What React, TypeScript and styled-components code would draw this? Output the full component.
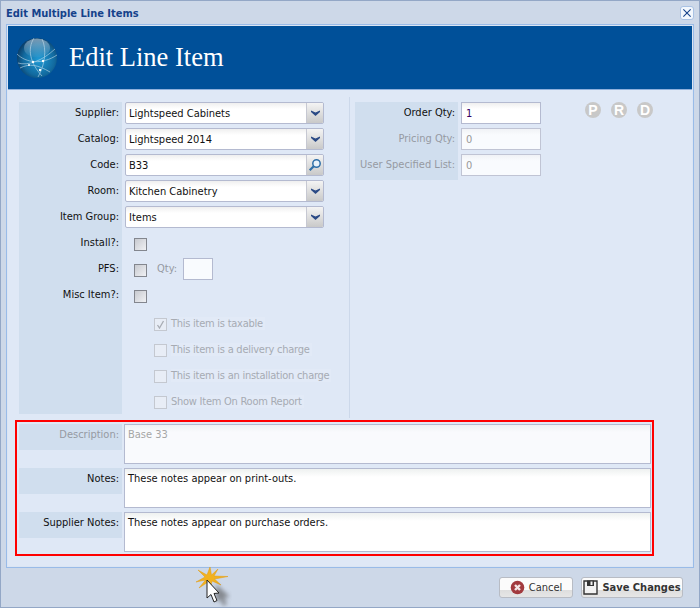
import React from "react";
import styled, { createGlobalStyle } from "styled-components";

const GlobalStyle = createGlobalStyle`
	html, body {
		margin: 0;
		padding: 0;
		background: #cdd8e8;
	}
	* {
		box-sizing: border-box;
	}
`;

const Windows = styled.div`
	position: relative;
	width: 700px;
	height: 608px;
	display: flex;
	flex-direction: column;
	background: #cdd8e8;
	border: 1px solid #93a7c6;
	font-family: "DejaVu Sans", "Liberation Sans", sans-serif;
	font-stretch: condensed;
	font-size: 11px;
	color: #111;
	overflow: hidden;
`;

const TitleBar = styled.div`
	height: 23px;
	flex: none;
	display: flex;
	align-items: center;
	justify-content: space-between;
	padding: 1px 5px 0 5px;
	font-weight: bold;
	font-size: 11px;
	color: #15428b;
`;

const CloseButton = styled.div`
	width: 14px;
	height: 14px;
	display: flex;
	align-items: center;
	justify-content: center;
	background: #f2f7fd;
	border: 1px solid #a9c2e4;
	border-radius: 3px;
`;

const Panel = styled.div`
	margin: 0 5px;
	height: 544px;
	flex: none;
	display: flex;
	flex-direction: column;
	background: #dfe8f6;
	border: 1px solid #99bbe8;
	outline: 1px solid #dbe5f3;
	outline-offset: -2px;
`;

const Banner = styled.div`
	height: 64px;
	flex: none;
	margin: 1px 1px 0;
	display: flex;
	align-items: center;
	gap: 11px;
	padding-left: 8px;
	background: #005099;
	border-bottom: 1px solid #8fb0dc;
`;

const BannerTitle = styled.div`
	font-family: "Liberation Serif", serif;
	font-stretch: normal;
	font-size: 26.5px;
	color: #fff;
`;

const Columns = styled.div`
	display: flex;
	margin-top: 7px;
	height: 321px;
	flex: none;
`;

const LeftColumn = styled.div`
	width: 343px;
	padding: 5px 0 0 12px;
	border-right: 1px solid #ccd8ea;
`;

const RightColumn = styled.div`
	display: flex;
	align-items: flex-start;
	padding: 5px 0 0 5px;
`;

const Rows = styled.div`
	display: flex;
	flex-direction: column;
`;

const Row = styled.div`
	display: flex;
	height: 26px;
`;

const LabelCell = styled.div<{ $dim?: boolean }>`
	width: 103px;
	height: 26px;
	flex: none;
	padding: 4px 3px 0 0;
	text-align: right;
	background: #d0deee;
	color: ${(p) => (p.$dim ? "#969aa2" : "#111")};
	white-space: nowrap;
`;

const FieldCell = styled.div`
	display: flex;
	align-items: flex-start;
	margin-left: 3px;
`;

const Combo = styled.div`
	width: 199px;
	height: 22px;
	display: flex;
	border: 1px solid #b4bad0;
	border-radius: 2px;
	background: linear-gradient(#efefef, #fff 6px);
	overflow: hidden;
`;

const ComboText = styled.div`
	flex: 1;
	padding: 4px 0 0 3px;
`;

const Trigger = styled.div`
	width: 17px;
	display: flex;
	align-items: center;
	justify-content: center;
	border-left: 1px solid #c6c8d2;
	background: linear-gradient(#f4f4f4, #c9c9c9);
`;

const Check = styled.div<{ $dim?: boolean }>`
	width: 13px;
	height: 13px;
	flex: none;
	display: flex;
	align-items: center;
	justify-content: center;
	border: 1px solid ${(p) => (p.$dim ? "#c4c8d0" : "#83868e")};
	background: ${(p) =>
		p.$dim ? "#e8edf6" : "linear-gradient(135deg, #c8cad0, #f0f1f4)"};
`;

const CheckSlot = styled.div`
	padding: 6px 0 0 9px;
`;

const QtyLabel = styled.div`
	margin: 4px 6px 0 10px;
	color: #969aa2;
`;

const QtyInput = styled.div`
	width: 30px;
	height: 22px;
	background: #f9fbfe;
	border: 1px solid #b4bad0;
`;

const OptionRow = styled.div`
	height: 26px;
	display: flex;
	align-items: flex-start;
	gap: 4px;
	padding: 8px 0 0 32px;
`;

const OptionText = styled.div`
	margin-top: -1px;
	padding-right: 2px;
	letter-spacing: -0.25px;
	color: #a6abb3;
	background: #e2eaf7;
`;

const SmallInput = styled.div<{ $dim?: boolean }>`
	width: 80px;
	height: 22px;
	padding: 4px 0 0 4px;
	border: 1px solid ${(p) => (p.$dim ? "#c0c4d4" : "#b4bad0")};
	background: ${(p) =>
		p.$dim
			? "linear-gradient(#f0f2f6, #f9fbfe 6px)"
			: "linear-gradient(#efefef, #fff 6px)"};
	color: ${(p) => (p.$dim ? "#999" : "#330066")};
`;

const Badges = styled.div`
	display: flex;
	gap: 10px;
	margin: 0 0 0 44px;
`;

const Badge = styled.div`
	width: 16px;
	height: 16px;
	border-radius: 50%;
	background: #c8c8c8;
	color: #fff;
	font-family: "Liberation Sans", sans-serif;
	font-stretch: normal;
	font-weight: bold;
	font-size: 14px;
	line-height: 16px;
	text-align: center;
`;

const Highlight = styled.div`
	width: 639px;
	height: 136px;
	flex: none;
	margin: 2px 0 0 8px;
	padding: 2px 1px 0 2px;
	display: flex;
	flex-direction: column;
	gap: 4px;
	border: 2px solid #f00;
`;

const NoteRow = styled.div`
	display: flex;
	height: 40px;
`;

const NoteField = styled.div<{ $dim?: boolean }>`
	flex: 1;
	margin-left: 2px;
	padding: 3px 3px;
	border: 1px solid #b4bad0;
	background: ${(p) =>
		p.$dim
			? "linear-gradient(#eef1f3, #f9fafd 7px)"
			: "linear-gradient(#eef1f0, #fff 8px)"};
	color: ${(p) => (p.$dim ? "#a6a6a6" : "#111")};
`;

const Footer = styled.div`
	flex: 1;
	display: flex;
	justify-content: flex-end;
	gap: 8px;
	padding: 9px 16px 0 0;
`;

const Button = styled.div<{ $width: number; $strong?: boolean }>`
	width: ${(p) => p.$width}px;
	height: 21px;
	display: flex;
	align-items: center;
	justify-content: center;
	gap: 4px;
	border: 1px solid #b8bcc4;
	border-radius: 3px;
	background: linear-gradient(#fbfbfb 65%, #dedede 65%, #e6e6e6);
	color: #333;
	font-weight: ${(p) => (p.$strong ? "bold" : "normal")};
	white-space: nowrap;
`;

const Cursor = styled.svg`
	position: absolute;
	left: 189px;
	top: 566px;
`;

function Chevron() {
	return (
		<svg width="11" height="8" viewBox="0 0 11 8">
			<path d="M1 1.5 L5.5 3.5 L10 1.5 V3 L5.5 7 L1 3 Z" fill="#2b4a85" />
		</svg>
	);
}

function Globe() {
	return (
		<svg width="42" height="46" viewBox="0 0 42 46">
			<defs>
				<radialGradient id="globeFill" cx="0.55" cy="0.55" r="0.6">
					<stop offset="0" stopColor="#1f9bd6" />
					<stop offset="0.65" stopColor="#126a9f" />
					<stop offset="1" stopColor="#093660" />
				</radialGradient>
				<linearGradient id="globeShine" x1="0" y1="0" x2="0" y2="1">
					<stop offset="0" stopColor="#fff" stopOpacity="0.45" />
					<stop offset="1" stopColor="#fff" stopOpacity="0.03" />
				</linearGradient>
			</defs>
			<circle cx="21" cy="23" r="20" fill="url(#globeFill)" />
			<ellipse cx="21" cy="13" rx="13" ry="9.5" fill="url(#globeShine)" />
			<g fill="none" stroke="#cfe4f0" strokeWidth="0.8" opacity="0.7">
				<path d="M1 19 C10 28 26 30 41 20" />
				<path d="M2 28 C12 31 26 26 39 14" />
				<path d="M4 33 C14 28 22 30 34 37" />
				<path d="M18 3 C11 14 14 28 26 41" />
				<path d="M26 4 C31 14 29 30 22 42" />
			</g>
			<g fill="#fff">
				<circle cx="17" cy="27" r="1.2" />
				<circle cx="27" cy="26" r="1.2" />
				<circle cx="24" cy="35" r="1.2" />
				<circle cx="13" cy="30" r="1" />
			</g>
		</svg>
	);
}

const leftRows = ["Supplier:", "Catalog:", "Code:", "Room:", "Item Group:"];
const comboValues = [
	"Lightspeed Cabinets",
	"Lightspeed 2014",
	"B33",
	"Kitchen Cabinetry",
	"Items",
];
const options = [
	"This item is taxable",
	"This item is a delivery charge",
	"This item is an installation charge",
	"Show Item On Room Report",
];

export default function App() {
	return (
		<Windows>
			<GlobalStyle />
			<TitleBar>
				Edit Multiple Line Items
				<CloseButton>
					<svg width="10" height="10" viewBox="0 0 11 11">
						<path d="M1.5 1.5 L9.5 9.5 M9.5 1.5 L1.5 9.5" stroke="#15428b" strokeWidth="1.2" />
					</svg>
				</CloseButton>
			</TitleBar>
			<Panel>
				<Banner>
					<Globe />
					<BannerTitle>Edit Line Item</BannerTitle>
				</Banner>
				<Columns>
					<LeftColumn>
						<Rows>
							{leftRows.map((label, i) => (
								<Row key={label}>
									<LabelCell>{label}</LabelCell>
									<FieldCell>
										<Combo>
											<ComboText>{comboValues[i]}</ComboText>
											<Trigger>
												{label === "Code:" ? (
													<svg width="14" height="14" viewBox="0 0 14 14">
														<circle cx="8.5" cy="5.5" r="3.7" fill="#e8f2fa" stroke="#2f6fa8" strokeWidth="1.5" />
														<path d="M5.7 8.3 L1.7 12.3" stroke="#2f6fa8" strokeWidth="2.2" />
													</svg>
												) : (
													<Chevron />
												)}
											</Trigger>
										</Combo>
									</FieldCell>
								</Row>
							))}
							<Row>
								<LabelCell>Install?:</LabelCell>
								<FieldCell>
									<CheckSlot>
										<Check />
									</CheckSlot>
								</FieldCell>
							</Row>
							<Row>
								<LabelCell>PFS:</LabelCell>
								<FieldCell>
									<CheckSlot>
										<Check />
									</CheckSlot>
									<QtyLabel>Qty:</QtyLabel>
									<QtyInput />
								</FieldCell>
							</Row>
							<Row>
								<LabelCell>Misc Item?:</LabelCell>
								<FieldCell>
									<CheckSlot>
										<Check />
									</CheckSlot>
								</FieldCell>
							</Row>
							{options.map((text, i) => (
								<Row key={text}>
									<LabelCell />
									<OptionRow>
										<Check $dim>
											{i === 0 && (
												<svg width="9" height="9" viewBox="0 0 9 9">
													<path d="M1.5 5 L3.5 8 L7.5 1" fill="none" stroke="#a8acb4" strokeWidth="1.3" />
												</svg>
											)}
										</Check>
										<OptionText>{text}</OptionText>
									</OptionRow>
								</Row>
							))}
						</Rows>
					</LeftColumn>
					<RightColumn>
						<Rows>
							<Row>
								<LabelCell>Order Qty:</LabelCell>
								<FieldCell>
									<SmallInput>1</SmallInput>
								</FieldCell>
							</Row>
							<Row>
								<LabelCell $dim>Pricing Qty:</LabelCell>
								<FieldCell>
									<SmallInput $dim>0</SmallInput>
								</FieldCell>
							</Row>
							<Row>
								<LabelCell $dim>User Specified List:</LabelCell>
								<FieldCell>
									<SmallInput $dim>0</SmallInput>
								</FieldCell>
							</Row>
						</Rows>
						<Badges>
							<Badge>P</Badge>
							<Badge>R</Badge>
							<Badge>D</Badge>
						</Badges>
					</RightColumn>
				</Columns>
				<Highlight>
					<NoteRow>
						<LabelCell $dim>Description:</LabelCell>
						<NoteField $dim>Base 33</NoteField>
					</NoteRow>
					<NoteRow>
						<LabelCell>Notes:</LabelCell>
						<NoteField>These notes appear on print-outs.</NoteField>
					</NoteRow>
					<NoteRow>
						<LabelCell>Supplier Notes:</LabelCell>
						<NoteField>These notes appear on purchase orders.</NoteField>
					</NoteRow>
				</Highlight>
			</Panel>
			<Footer>
				<Button $width={74}>
					<svg width="15" height="15" viewBox="0 0 15 15">
						<circle cx="7.5" cy="7.5" r="6.8" fill="#a23a3e" />
						<path d="M5 5 L10 10 M10 5 L5 10" stroke="#f4e6e6" strokeWidth="2.4" />
					</svg>
					Cancel
				</Button>
				<Button $width={102} $strong>
					<svg width="15" height="15" viewBox="0 0 15 15">
						<path d="M1 1 H14 V14 H1 Z" fill="#f2f2f2" stroke="#333" strokeWidth="1.4" />
						<path d="M4 0.5 H11 V6 H4 Z" fill="#333" />
						<path d="M7.5 1.5 H9.5 V5 H7.5 Z" fill="#f2f2f2" />
					</svg>
					Save Changes
				</Button>
			</Footer>
			<Cursor width="42" height="46" viewBox="0 0 42 46">
				<defs>
					<filter id="cursorBlur" x="-50%" y="-50%" width="200%" height="200%">
						<feGaussianBlur stdDeviation="2" />
					</filter>
				</defs>
				<path
					d="M20 0 L21.5 8 L28 2 L24 9 L38 9.5 L24.5 12 L31 18 L22 14 L20 24 L18 15 L9 21 L15.5 13 L6 15 L15 10 L8 3 L17 8 Z"
					fill="#f2b21f"
					stroke="#e29a10"
					strokeWidth="0.5"
				/>
				<path
					d="M22 14 L22 32 L26 29 L29 36 L33 34 L30 27.5 L36 27 Z"
					fill="#555"
					opacity="0.6"
					filter="url(#cursorBlur)"
					transform="translate(4 3)"
				/>
				<path
					d="M17 13 L17 31 L21 27.5 L24 35 L27 33.5 L24 26.5 L29 26 Z"
					fill="#fff"
					stroke="#222"
					strokeWidth="1"
				/>
			</Cursor>
		</Windows>
	);
}
